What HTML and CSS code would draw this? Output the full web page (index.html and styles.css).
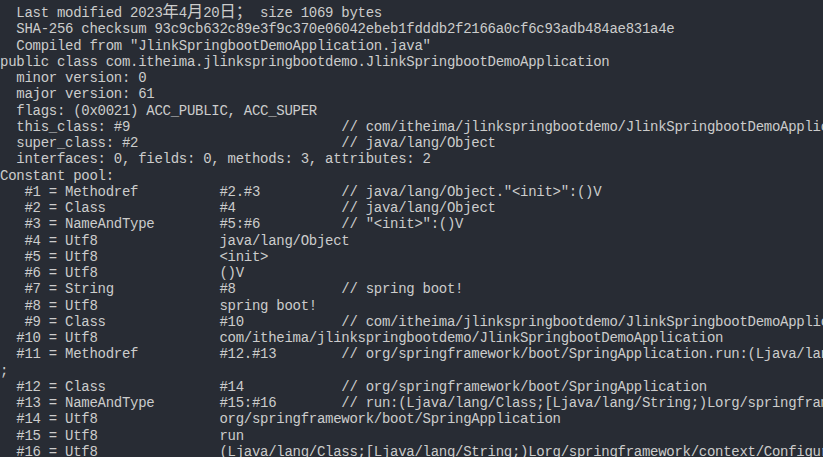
FILE: index.html
```html
<!DOCTYPE html>
<html lang="en">
<head>
<meta charset="utf-8">
<title>javap output</title>
<link rel="stylesheet" href="styles.css">
</head>
<body>
<pre class="console">  Last modified 2023<span class="cjk">年</span>4<span class="cjk">月</span>20<span class="cjk">日；</span> size 1069 bytes
  SHA-256 checksum 93c9cb632c89e3f9c370e06042ebeb1fdddb2f2166a0cf6c93adb484ae831a4e
  Compiled from "JlinkSpringbootDemoApplication.java"
public class com.itheima.jlinkspringbootdemo.JlinkSpringbootDemoApplication
  minor version: 0
  major version: 61
  flags: (0x0021) ACC_PUBLIC, ACC_SUPER
  this_class: #9                          // com/itheima/jlinkspringbootdemo/JlinkSpringbootDemoApplication
  super_class: #2                         // java/lang/Object
  interfaces: 0, fields: 0, methods: 3, attributes: 2
Constant pool:
   #1 = Methodref          #2.#3          // java/lang/Object."&lt;init&gt;":()V
   #2 = Class              #4             // java/lang/Object
   #3 = NameAndType        #5:#6          // "&lt;init&gt;":()V
   #4 = Utf8               java/lang/Object
   #5 = Utf8               &lt;init&gt;
   #6 = Utf8               ()V
   #7 = String             #8             // spring boot!
   #8 = Utf8               spring boot!
   #9 = Class              #10            // com/itheima/jlinkspringbootdemo/JlinkSpringbootDemoApplication
  #10 = Utf8               com/itheima/jlinkspringbootdemo/JlinkSpringbootDemoApplication
  #11 = Methodref          #12.#13        // org/springframework/boot/SpringApplication.run:(Ljava/lang/Class;[Ljava/lang/String;)Lorg/springframework/context/ConfigurableApplicationContext
;
  #12 = Class              #14            // org/springframework/boot/SpringApplication
  #13 = NameAndType        #15:#16        // run:(Ljava/lang/Class;[Ljava/lang/String;)Lorg/springframework/context/ConfigurableApplicationContext;
  #14 = Utf8               org/springframework/boot/SpringApplication
  #15 = Utf8               run
  #16 = Utf8               (Ljava/lang/Class;[Ljava/lang/String;)Lorg/springframework/context/ConfigurableApplicationContext;
</pre>
</body>
</html>
```

FILE: styles.css
```css
html, body {
  margin: 0;
  padding: 0;
  background: #282c34;
  overflow: hidden;
  width: 823px;
  height: 457px;
}

.console {
  margin: 0;
  padding: 2px 0 0 0;
  font-family: "Liberation Mono", "DejaVu Sans Mono", monospace;
  font-size: 14px;
  letter-spacing: -0.276px;
  line-height: 16.25px;
  color: #cccccc;
  white-space: pre;
}

.cjk {
  font-family: "Noto Sans CJK SC", sans-serif;
  font-size: 16.25px;
  letter-spacing: 0;
  line-height: 16.25px;
}
```
